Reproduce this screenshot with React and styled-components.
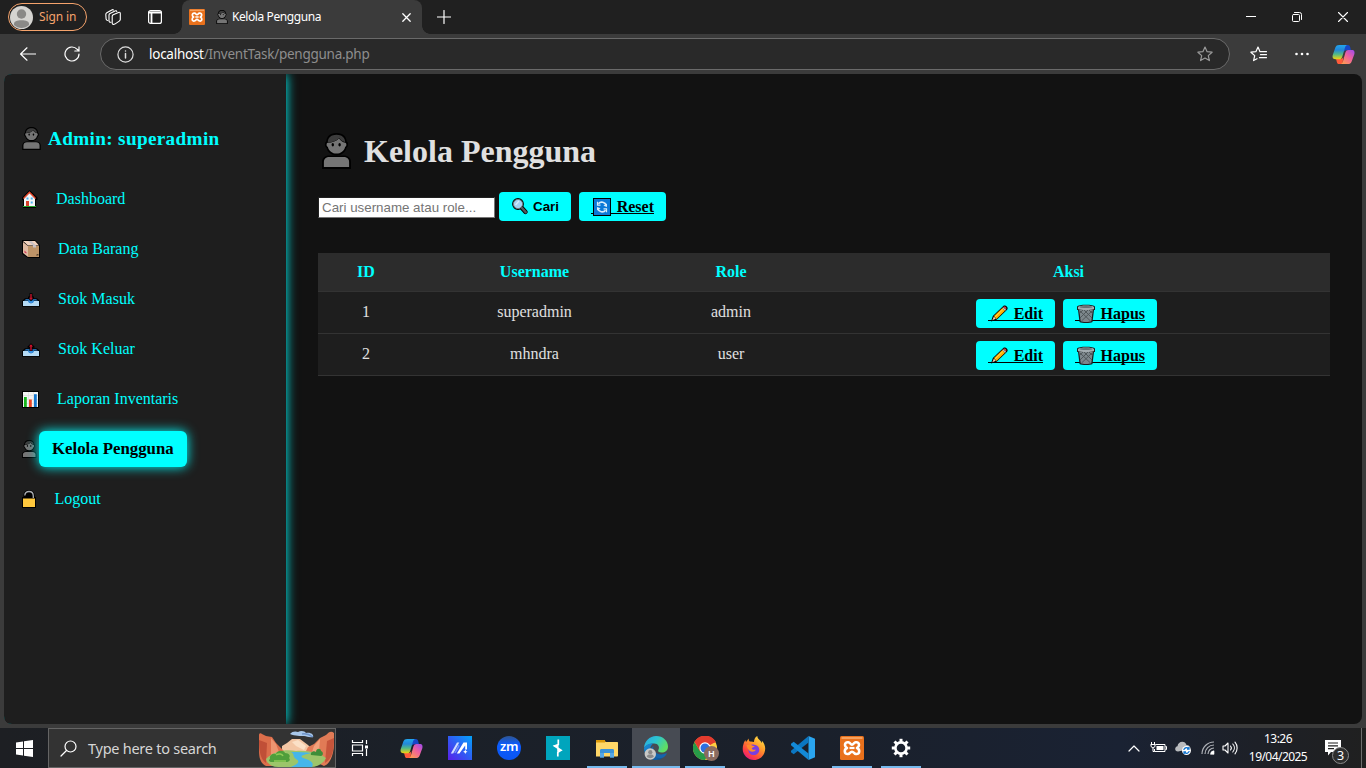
import React from "react";
import styled, { createGlobalStyle, css } from "styled-components";

const ui = `"Noto Sans", "Open Sans", sans-serif`;
const serif = `"Liberation Serif", "Times New Roman", serif`;

const GlobalStyle = createGlobalStyle`
  *, *::before, *::after { box-sizing: border-box; }
  html, body { margin: 0; padding: 0; overflow: hidden; background: #3b3b3b; }
  svg { display: block; flex: none; }
`;

/* ---------- emoji style drawings ---------- */

const PersonIcon = ({ w = 29, h = 36 }) => (
  <svg width={w} height={h} viewBox="0 0 29 36">
    <path d="M0 36V29c0-4 3-6.500 7.500-6.500h14c4.500 0 7.500 2.500 7.500 6.500v7z" fill="#000" />
    <path d="M1.900 34v-5c0-3.200 2.300-5 5.600-5h14c3.300 0 5.600 1.800 5.600 5v5z" fill="#757575" />
    <path d="M14.500 0C7.500 0 4.600 4 4.300 8.500 2.300 9.500 2.500 14 4.500 14.800c1.200 4.700 5.200 7.700 10 7.700s8.800-3 10-7.700c2-.8 2.200-5.300.2-6.300C24.400 4 21.500 0 14.500 0z" fill="#000" />
    <path d="M5.800 9.800c4.500-.2 9-1.900 11.200-4.300 1.600 2.300 3.600 3.700 6.200 4.300 1.600.2 1.600 3.700-.1 4.100-.9 4-4.500 6.600-8.600 6.600s-7.700-2.600-8.600-6.600c-1.700-.4-1.700-4.100-.1-4.100z" fill="#757575" />
    <path d="M5.800 9.400C5.800 4.500 9.500 1.800 14.500 1.800s8.700 2.700 8.700 7.400c-2.400-.6-4.600-2-6-4.200C15 7.800 10.500 9.400 5.800 9.400z" fill="#3c3c3c" />
    <ellipse cx="10.800" cy="11.800" rx="1.200" ry="1.800" fill="#000" />
    <ellipse cx="17.600" cy="11.800" rx="1.200" ry="1.800" fill="#000" />
  </svg>
);

const HouseIcon = () => (
  <svg width="16" height="18" viewBox="0 0 16 18">
    <path d="M7.500 0 0 7.500v2.500h1v8h13v-8h1.500V7.500z" fill="#000" />
    <path d="M2 8.500 7.500 3 13 8.500V16H2z" fill="#f3f5f7" />
    <path d="M1.500 8.500 7.500 2.300l6 6.200" fill="none" stroke="#e8472b" strokeWidth="1.300" />
    <path d="M4.500 7.500h2v2h-2zM8.700 7.500h2v2h-2zM8.700 11.500h2v2h-2z" fill="#48b5ef" />
    <path d="M4 11h3v5H4z" fill="#d8402a" />
    <path d="M1 16h13v1H1z" fill="#23a52c" />
  </svg>
);

const BoxIcon = () => (
  <svg width="18" height="18" viewBox="0 0 18 18">
    <path d="M0 0h13l5 5v13H6l-6-4z" fill="#000" />
    <path d="M1 2l5 4v11l-5-4z" fill="#dfb9a0" />
    <path d="M6 6h11v11H6z" fill="#bd9367" />
    <path d="M1 1h12l4 4.500H6z" fill="#f2d2bd" />
    <path d="M6 1h3.500l4.500 4.500v2h-3v-2z" fill="#c9c1c4" />
    <path d="M2.500 10.500l2 2v1l-2-1z" fill="#d23258" />
    <path d="M14 15.500l1-1.500h1.500v1.500z" fill="#554431" />
  </svg>
);

const TrayIcon = ({ out }) => (
  <svg width="18" height="16" viewBox="0 0 18 16">
    <g transform="translate(0 2.300) scale(1 .9)">
      <path d="M0 8.500L3 5.500h12l3 3V15H0z" fill="#000" />
      <path d="M2 8L4 6.500h10L16 8z" fill="#2f8be0" />
      <path d="M1 8.500h5.500a2.500 2.500 0 005 0H17V14H1z" fill="#b5dbf5" />
      <path d="M6 8h6a3 3 0 01-6 0z" fill="#3592e6" />
      {out ? (
        <g>
          <path d="M9 0l3.500 3.600V5h-2v3.500h-3V5h-2V3.600z" fill="#000" />
          <path d="M9 1l2 2.500H9.700V8H8.300V3.500H7z" fill="#d3122e" />
        </g>
      ) : (
        <g>
          <path d="M7.500 0h3v3.500H12V5.500L9 8.800 6 5.500v-2h1.500z" fill="#000" />
          <path d="M8.300.8h1.400V5H11L9 7.600 7 5h1.300z" fill="#c5132c" />
        </g>
      )}
    </g>
  </svg>
);

const ChartIcon = () => (
  <svg width="17" height="17" viewBox="0 0 17 17">
    <path d="M0 0h17v17H0z" fill="#000" />
    <path d="M1 1h15v15H1z" fill="#f4f4f4" />
    <path d="M1 4.500h15M1 8.500h15M1 12.500h15M6.500 1v15M11.500 1v15" stroke="#d9d9d9" strokeWidth=".6" />
    <path d="M2 6h2.800v10H2z" fill="#16b51b" />
    <path d="M7 8.500h2.800V16H7z" fill="#ed4424" />
    <path d="M12 3.200h2.800V16H12z" fill="#1677cf" />
  </svg>
);

const LockIcon = () => (
  <svg width="14" height="18" viewBox="0 0 14 18">
    <path d="M0 7h1.500C1 2.500 3.500 0 7 0s6 2.500 5.800 7H14v11H0z" fill="#000" />
    <path d="M2.800 5.500C3 3 4.800 1.500 7 1.500s4.300 1.500 4.300 4.500v2" fill="none" stroke="#a9adb2" strokeWidth="1.300" />
    <path d="M1 8.500h12V17H1z" fill="#ffc83d" />
  </svg>
);

const LensIcon = () => (
  <svg width="16" height="17" viewBox="0 0 16 17">
    <path d="M9.500 9.500l4 4.500" stroke="#000" strokeWidth="4.200" strokeLinecap="round" />
    <circle cx="6" cy="6" r="5" fill="#a3d2f3" stroke="#000" strokeWidth="1.800" />
    <circle cx="6" cy="6" r="4.600" fill="#a3d2f3" stroke="#737a80" strokeWidth="1" />
    <path d="M10 10l3.700 4.200" stroke="#53595f" strokeWidth="2.500" strokeLinecap="round" />
    <path d="M3.500 7l3.500-4" stroke="#d6eefd" strokeWidth="1.200" />
  </svg>
);

const RefreshIcon = () => (
  <svg width="18" height="18" viewBox="0 0 18 18">
    <path d="M0 0h18v18H0z" fill="#000" />
    <path d="M1 1h16v16H1z" fill="#0b79d8" />
    <path d="M4.800 10.500a4.500 4.500 0 007.800 1.700M13.200 7.500a4.500 4.500 0 00-7.800-1.700" fill="none" stroke="#d8edfc" strokeWidth="1.700" />
    <path d="M4 12.500V9l3.600 1.300zM14 5.500V9l-3.600-1.300z" fill="#d8edfc" />
    <path d="M4.500 3.800v3.400h3M13.500 14.200v-3.400h-3" fill="none" stroke="#d8edfc" strokeWidth="1.200" />
  </svg>
);

const PencilIcon = () => (
  <svg width="19" height="19" viewBox="0 0 20 19">
    <path d="M1 18l2-6L14 1.500c2-1.800 6 1.500 4 4L7 16z" fill="#000" />
    <path d="M2.500 16.500l1.600-3.800 2 2.200z" fill="#f5d5b8" />
    <path d="M4.200 12.200L13 3.800l2.800 2.700-9 8.700z" fill="#ffb300" />
    <path d="M5.200 13.200l8.800-8.400" stroke="#ffd34f" strokeWidth="1" />
    <path d="M13 3.800l1-1 2.900 2.800-1 1z" fill="#c4cbd0" />
    <path d="M14.200 2.600c1.500-1.300 4 .8 2.700 2.800z" fill="#e9414d" />
  </svg>
);

const BinIcon = () => (
  <svg width="18" height="19" viewBox="0 0 18 19">
    <path d="M0 2.500C1 0 17 0 18 2.500V6h-1l-1.500 12c-2 1.300-11 1.300-13 0L1 6H0z" fill="#1b1e20" />
    <path d="M2.200 6h13.600l-1.500 11.300c-2 .9-8.600.9-10.600 0z" fill="#7d878c" />
    <path d="M3 7l10.500 10M7 6l8 8M12 6l3.500 3.500M15 7L4.500 17M11 6l-8 8M6 6L2.800 9" stroke="#4b5256" strokeWidth=".9" />
    <path d="M1 3c1.500-2 14.500-2 16 0v2c-2 1.300-14 1.300-16 0z" fill="#a4adb1" />
    <ellipse cx="9" cy="3" rx="6.500" ry="1" fill="#687277" />
  </svg>
);

/* ---------- application logos ---------- */

const CopilotIcon = ({ size }) => (
  <svg width={size} height={size} viewBox="0 0 24 24">
    <defs>
      <linearGradient id="cpBlue" x1="0" y1="0" x2="0" y2="1">
        <stop offset="0" stopColor="#21a6ee" />
        <stop offset=".35" stopColor="#2387d8" />
        <stop offset=".65" stopColor="#52b985" />
        <stop offset="1" stopColor="#f4d50c" />
      </linearGradient>
      <linearGradient id="cpPink" x1="1" y1="0" x2=".2" y2="1">
        <stop offset="0" stopColor="#9b4af0" />
        <stop offset=".5" stopColor="#f0609d" />
        <stop offset="1" stopColor="#ff9b51" />
      </linearGradient>
    </defs>
    <path d="M13 2h3.500c1.400 0 2 .8 2.400 2l.9 3.500H15c-1.500 0-2.400 1-2.800 2.200z" fill="#1746c8" />
    <path d="M11 22H7.500c-1.400 0-2-.8-2.400-2l-.9-3.500H9c1.500 0 2.400-1 2.800-2.200z" fill="#ff5b3a" />
    <path d="M7.500 2H16c-1.300.3-2 1.300-2.400 2.600L10.800 14c-.6 2-1.600 3-3.600 3H3.500C.8 17 .2 14.800.8 12.600L3.500 4.800C4.200 2.800 5.500 2 7.500 2z" fill="url(#cpBlue)" />
    <path d="M16.500 22H9c1.200-.3 1.900-1.200 2.300-2.500L14 10c.6-2 1.600-2.700 3.300-2.700h3.400c2.700 0 3.200 2.200 2.600 4.400l-2.800 7.500c-.7 2-2 2.800-4 2.800z" fill="url(#cpPink)" />
  </svg>
);

const XamppIcon = ({ size }) => (
  <svg width={size} height={size} viewBox="0 0 24 24">
    <rect width="24" height="24" rx="1.500" fill="#e9711c" />
    <path d="M1.500 1h21v2h-21z" fill="#f6a15e" />
    <path
      d="M8.300 6.200c-2.300-.2-3.300 1-3.300 2.900 0 1.500.6 2.300 2 2.900-1.400.6-2.200 1.500-2.200 3.200 0 2.200 1.400 3 3.200 2.800 2-.2 2-2.300 4-2.300s2 2.100 4 2.300c1.800.2 3.200-.6 3.200-2.800 0-1.700-.8-2.600-2.200-3.200 1.400-.6 2-1.400 2-2.900 0-1.900-1-3.100-3.300-2.900-2 .2-2 2.400-3.700 2.400s-1.700-2.200-3.700-2.400z"
      fill="none" stroke="#fff" strokeWidth="2.600" strokeLinejoin="round" />
    <path d="M9.500 12h5" stroke="#fff" strokeWidth="2.200" />
  </svg>
);

const MIcon = () => (
  <svg width="24" height="24" viewBox="0 0 24 24">
    <defs>
      <linearGradient id="mBg" x1="0" y1="1" x2="1" y2="0">
        <stop offset="0" stopColor="#5a1fe8" />
        <stop offset=".5" stopColor="#2f5cf4" />
        <stop offset="1" stopColor="#03a5fb" />
      </linearGradient>
    </defs>
    <rect width="24" height="24" fill="url(#mBg)" />
    <path d="M2.800 17.500L9 6.500h2.300L5.200 17.500z" fill="#cfdcff" />
    <path d="M8.800 17.500L15.500 6.500H19v7h-1.800v-4l-5.800 8z" fill="#fff" />
    <path d="M17.300 13.500l.7 1.500 1.500.7-1.500.7-.7 1.500-.7-1.500-1.500-.7 1.500-.7z" fill="#fff" />
    <path d="M8.500 12.500l2.300-4 .8 1.500-3.800 7H6.200z" fill="#8fabff" opacity=".7" />
  </svg>
);

const ZoomCircle = styled.div`
  width: 24px;
  height: 24px;
  border-radius: 50%;
  background: linear-gradient(#2f5590, #0b5cff 35%, #0b55f0);
  color: #fff;
  font: 600 13px/21px ${ui};
  letter-spacing: -0.4px;
  text-align: center;
`;

const BoltAppIcon = () => (
  <svg width="24" height="24" viewBox="0 0 24 24">
    <rect width="24" height="24" fill="#00a5bd" />
    <path d="M12.300 3.500v5L8.500 10l6.500 4.300-3.200 2V20.500" fill="none" stroke="#fff" strokeWidth="1.700" />
    <path d="M7 9.800l5.500-1.300v3.700zM16.500 14.500l-5.300 1v-3.500z" fill="#fff" />
  </svg>
);

const FolderIcon = () => (
  <svg width="22" height="19" viewBox="0 0 22 19">
    <path d="M0 1h8l2 2H0z" fill="#e8a110" />
    <path d="M0 3h21c.6 0 1 .4 1 1v12.500c0 .6-.4 1-1 1H0z" fill="#ffd768" />
    <path d="M0 1h9v2.500H0z" fill="#dd9a09" />
    <path d="M4 18.500v-7c0-1 .6-1.500 1.500-1.500h11c1 0 1.500.5 1.500 1.500v7h-4V14H8v4.500z" fill="#3a92d8" />
    <path d="M4 14h4v4.500H4zM14 14h4v4.500h-4z" fill="#57a7e5" />
  </svg>
);

const EdgeIcon = () => (
  <svg width="24" height="24" viewBox="0 0 24 24">
    <defs>
      <linearGradient id="edTop" x1="0" y1="0" x2="1" y2=".5">
        <stop offset="0" stopColor="#2ba5e0" />
        <stop offset=".5" stopColor="#2cc5d2" />
        <stop offset="1" stopColor="#60dd62" />
      </linearGradient>
      <linearGradient id="edLow" x1="0" y1="0" x2="1" y2="1">
        <stop offset="0" stopColor="#1a90dc" />
        <stop offset="1" stopColor="#0b4f91" />
      </linearGradient>
    </defs>
    <path d="M0 12C.5 5 5.500 0 12.200 0 19 0 24 5 24 10.500c0 4-3 6-6.300 6-3 0-4.200-1.300-3.400-2.500 2-3-.3-6.500-4-6.500C5.500 7.500 1.500 9.500 0 12z" fill="url(#edTop)" />
    <path d="M0 12c1.500-3 5-5 9.500-4.500-2 1-3.500 3.500-3.300 6.500.4 6 6.500 9.500 13 7.500-2 1.700-4.500 2.500-7.200 2.500C5 24 0 19 0 12z" fill="url(#edLow)" />
    <path d="M9.500 10c-1.500 6.500 5.500 10.500 12.800 7.300.4 0 .6.200.3.700-1 1.700-2.300 3-3.700 3.700-7 2-12-2.500-12-7 0-2 1-3.700 2.600-4.700z" fill="#1565ad" />
    <circle cx="6.300" cy="18" r="5.700" fill="#c9c9c7" />
    <circle cx="6.300" cy="16.200" r="2.100" fill="#8b8b8b" />
    <path d="M2.700 20.600c.6-1.700 2-2 3.600-2s3 .3 3.600 2c-2 2.200-5.200 2.200-7.200 0z" fill="#8b8b8b" />
  </svg>
);

const ChromeWrap = styled.div`
  position: relative;
  width: 24px;
  height: 24px;
`;
const ChromeBadge = styled.span`
  position: absolute;
  left: 11px;
  top: 10px;
  width: 15px;
  height: 15px;
  border-radius: 50%;
  background: #8b6b60;
  color: #fff;
  font: 600 9px/15px ${ui};
  text-align: center;
`;
const ChromeIcon = () => (
  <ChromeWrap>
    <svg width="24" height="24" viewBox="0 0 24 24">
      <circle cx="12" cy="12" r="12" fill="#ffcd40" />
      <path d="M12 12L1.600 6A12 12 0 0122.400 6z" fill="#e33b2e" />
      <path d="M1.600 6A12 12 0 0012 24l5-9-10 0z" fill="#279b48" />
      <path d="M12 6.500h11A12 12 0 001.600 6l5.200 9z" fill="#e33b2e" />
      <circle cx="12" cy="12" r="5.700" fill="#fff" />
      <circle cx="12" cy="12" r="4.500" fill="#2d6fe0" />
    </svg>
    <ChromeBadge>H</ChromeBadge>
  </ChromeWrap>
);

const FirefoxIcon = () => (
  <svg width="24" height="24" viewBox="0 0 24 24">
    <defs>
      <linearGradient id="ffBody" x1=".9" y1="0" x2=".2" y2="1">
        <stop offset="0" stopColor="#fff04a" />
        <stop offset=".4" stopColor="#ff9a2a" />
        <stop offset=".75" stopColor="#ff433f" />
        <stop offset="1" stopColor="#e21585" />
      </linearGradient>
    </defs>
    <path d="M1.500 8C2 6 3 4.500 3.500 4c0 1 .3 1.500.6 2C5 4.800 6 3.500 6.500 2.500c.2 1.500.5 2.300 1.300 3 1.500-.2 3 0 4.200.5 0-2.500 1-4.800 3.300-6 0 2.500 1.700 3.300 3.200 5 .5.600 1 1.300 1.300 2 .3-.700.2-1.500 0-2.300 2.200 2 3.400 4.800 3.400 7.800C23.200 19 18.200 24 12 24S.7 19 .7 13c0-1.800.2-3.500.8-5z" fill="url(#ffBody)" />
    <path d="M7 11c1-2.300 3-2.800 5-2.200 3 .2 5.300 2 5.300 5 0 3.200-2.500 5.300-5.300 5.300-3.500 0-5.800-2.500-5.500-5.600z" fill="#7a3fe0" />
    <path d="M4.500 9c2 0 3-.6 4.500 0 1 .5 2 1 3.700 1-.3 1.200-2.500 1.300-2.900 2.200.2 1.600 2.500 2 4.200 1.300-1 2.400-4.500 3-6.500 1.200C5.500 13 5 11 4.500 9z" fill="#ff8a2b" />
  </svg>
);

const VsCodeIcon = () => (
  <svg width="24" height="24" viewBox="0 0 24 24">
    <path d="M17.500 0L24 2.800v18.400L17.500 24z" fill="#2aa5ef" />
    <path d="M17.500 0v6.500L2.700 18.300 0 16.300v-1.500z" fill="#0b77c2" />
    <path d="M17.500 24v-6.500L2.700 5.700 0 7.700v1.500z" fill="#1389d6" />
  </svg>
);

const GearIcon = () => {
  const teeth = [0, 45, 90, 135, 180, 225, 270, 315];
  return (
    <svg width="20" height="20" viewBox="0 0 20 20">
      <circle cx="10" cy="10" r="5.600" fill="none" stroke="#fff" strokeWidth="2.600" />
      {teeth.map((a) => (
        <rect key={a} x="8.500" y=".8" width="3" height="3.600" fill="#fff" transform={`rotate(${a} 10 10)`} />
      ))}
    </svg>
  );
};

const LandscapeIcon = () => (
  <svg width="76" height="37" viewBox="0 0 76 37">
    <path d="M32 4c2-3 6-3 8-2 3-2 7-1 8 1 5-1 8 2 7 4 -4 1-6-1-9-1s-9 0-14-2z" fill="#a9c8ea" />
    <path d="M44 4c4-1 8 1 11 3" stroke="#6f94c9" strokeWidth="1.500" fill="none" />
    <path d="M24 16l5-3 5-4h8l8 6 4 4v5H24z" fill="#f3c6a4" />
    <path d="M34 12l6-2 8 6-2 4-8-4z" fill="#fbe0c6" />
    <path d="M1 5c0-2 2-2 3-1l4 2 6 1 4 6 5 5 5 5 1 6-12 7H8c-6-3-7-9-7-16z" fill="#dc6e4b" />
    <path d="M1 10l8 3-1 20c-6-4-7-13-7-23z" fill="#c04f37" />
    <path d="M13 8l5 6 3 8-8 8z" fill="#ee9570" />
    <path d="M76 3c-3-3-6 0-8 2l-6 3-6 6-6 3-4 8 14 8 6 3c8-3 11-15 10-33z" fill="#e17b56" />
    <path d="M76 8l-7 3-2 22c7-4 9-12 9-25z" fill="#c6553b" />
    <path d="M62 9l-6 7-3 9 8-3z" fill="#f3a27c" />
    <path d="M8 29c8-8 20-10 30-8 12-1 24 2 30 7-3 6-9 9-15 9H20c-6 0-11-3-12-8z" fill="#9cc56a" />
    <path d="M33 22c8 0 15 0 20 1-8 2-14 3-5 6 6 2 8 5 6 8H33c6-3 10-5 5-8-4-3-1-5-5-7z" fill="#45b6ea" />
    <path d="M12 29c-1-4 3-6 6-5 1-4 8-4 9-1 4 0 6 3 4 5 2 2 0 4-3 4H14c-3 0-4-2-2-3z" fill="#4f9e3b" />
    <path d="M18 25c3-2 6-1 7 1M16 31h12" stroke="#8fcb56" strokeWidth="1.500" fill="none" />
    <path d="M53 25c-1-3 3-5 5-3 0-4 5-4 5-1 3 1 2 5 0 5z" fill="#3f8d38" />
  </svg>
);

/* ---------- line icons ---------- */

const Line = styled.svg.attrs((p) => ({
  fill: "none",
  stroke: p.stroke || "#fff",
  strokeWidth: p.sw || 1.2,
  strokeLinecap: "round",
  strokeLinejoin: "round",
}))``;

/* ---------- browser frame ---------- */

const Screen = styled.div`
  width: 1366px;
  height: 768px;
  display: flex;
  flex-direction: column;
  background: #3b3b3b;
  overflow: hidden;
`;

const TabStrip = styled.header`
  height: 34px;
  flex: none;
  display: flex;
  align-items: center;
  background: #202020;
`;

const SignIn = styled.div`
  width: 79px;
  height: 28px;
  margin-left: 8px;
  border: 1px solid #f5a36c;
  border-radius: 14px;
  display: flex;
  align-items: center;
  gap: 6px;
  padding-left: 1px;
  color: #f5a36c;
  font: 12px/16px ${ui};
  letter-spacing: -0.1px;
  white-space: nowrap;
`;

const StripIcon = styled.div`
  margin-left: ${(p) => p.$gap}px;
`;

const Tab = styled.div`
  position: relative;
  width: 240px;
  height: 34px;
  margin-left: 20px;
  padding: 0 9px 0 7px;
  display: flex;
  align-items: center;
  background: #3b3b3b;
  border-radius: 8px 8px 0 0;
  color: #fff;
  font: 12px/16px ${ui};
  &::before, &::after {
    content: "";
    position: absolute;
    bottom: 0;
    width: 8px;
    height: 8px;
  }
  &::before {
    left: -8px;
    background: radial-gradient(circle at 0 0, #202020 7.500px, #3b3b3b 8px);
  }
  &::after {
    right: -8px;
    background: radial-gradient(circle at 100% 0, #202020 7.500px, #3b3b3b 8px);
  }
`;
const TabTitle = styled.span`
  flex: 1;
  padding-left: 4px;
  letter-spacing: -0.42px;
`;
const TabEmoji = styled.span`
  margin-left: 11px;
`;

const WindowButtons = styled.div`
  margin-left: auto;
  display: flex;
  & > * {
    width: 46px;
    display: flex;
    justify-content: center;
  }
`;

const Toolbar = styled.div`
  height: 40px;
  flex: none;
  display: flex;
  align-items: center;
  padding: 0 10px 0 20px;
`;
const AddressBar = styled.div`
  width: 1130px;
  height: 32px;
  margin-left: 20px;
  padding: 0 16px;
  display: flex;
  align-items: center;
  border: 1px solid #6a6a6a;
  border-radius: 16px;
  background: #292929;
`;
const Url = styled.div`
  flex: 1;
  margin-left: 15px;
  color: #8e8e8e;
  font: 13.500px/20px ${ui};
  letter-spacing: -0.26px;
  b { color: #fff; font-weight: 400; }
`;

/* ---------- page ---------- */

const Page = styled.div`
  height: 650px;
  margin: 0 4px 4px;
  flex: none;
  display: flex;
  border-radius: 8px;
  overflow: hidden;
  background: #121212;
  font-family: ${serif};
  color: #e0e0e0;
`;

const Sidebar = styled.nav`
  width: 282px;
  padding: 45px 18px 0;
  background: #1e1e1e;
  box-shadow: 0 0 11px #00ffff;
  color: #00ffff;
`;
const AdminTitle = styled.h3`
  height: 40px;
  margin: 0 0 15px;
  display: flex;
  align-items: center;
  gap: 7px;
  font-size: 19.200px;
  letter-spacing: 0.34px;
  white-space: nowrap;
  svg { margin-top: -2px; }
`;
const NavRow = styled.div`
  height: 50px;
  display: flex;
  align-items: center;
`;
const NavIcon = styled.span`
  width: ${(p) => p.$w}px;
`;
const NavLink = styled.a`
  height: 36px;
  padding: 0 13px;
  border-radius: 6px;
  font-size: 16px;
  line-height: 36px;
  white-space: nowrap;
  ${(p) =>
    p.$active &&
    css`
      z-index: 1;
      background: #00ffff;
      color: #000;
      font-size: 16.800px;
      font-weight: 700;
      box-shadow: 0 0 12px #00ffff;
    `}
`;

const Main = styled.main`
  flex: 1;
  padding: 55px 32px 0;
`;
const Heading = styled.h1`
  height: 44px;
  margin: 0 0 19px;
  padding-left: 4px;
  display: flex;
  align-items: center;
  gap: 13px;
  font-size: 32px;
  line-height: 44px;
`;
const SearchForm = styled.div`
  display: flex;
  align-items: center;
`;
const SearchInput = styled.input`
  width: 177px;
  height: 21px;
  margin: 2px 4px 0 0;
  padding: 1px 3px;
  border: 1px inset #767676;
  background: #fff;
  font: 13.333px "Liberation Sans", Arial, sans-serif;
  &::placeholder { color: #757575; }
`;
const Button = styled.a`
  width: ${(p) => p.$w}px;
  height: 29px;
  padding: 0 12px;
  display: inline-flex;
  align-items: center;
  justify-content: space-between;
  border-radius: 4px;
  background: #00ffff;
  color: #000;
  font: 700 ${(p) => (p.$plain ? `13.333px "Liberation Sans", Arial, sans-serif` : `16px ${serif}`)};
  position: relative;
  & + & { margin-left: 8px; }
  ${(p) =>
    !p.$plain &&
    css`
      &::before {
        content: "";
        position: absolute;
        left: 12px;
        right: 12px;
        bottom: 7px;
        height: 1px;
        background: #000;
      }
    `}
  svg, span { position: relative; }
  svg { margin-left: ${(p) => (p.$plain ? 1 : 2)}px; }
`;

const Table = styled.table`
  width: 1012px;
  margin-top: 32px;
  border-collapse: separate;
  border-spacing: 0;
  table-layout: fixed;
  background: #1e1e1e;
  text-align: center;
  font-size: 16px;
  th, td { border-bottom: 1px solid #333; }
`;
const Th = styled.th`
  width: ${(p) => p.$w}px;
  height: 39px;
  padding: 0;
  background: #2c2c2c;
  color: #00ffff;
`;
const Td = styled.td`
  height: 42px;
  padding: ${(p) => (p.$actions ? "2px 4px 0 0" : "0 0 2px")};
`;
const Actions = styled.div`
  display: flex;
  justify-content: center;
`;

/* ---------- taskbar ---------- */

const Taskbar = styled.footer`
  height: 40px;
  flex: none;
  display: flex;
  background: linear-gradient(90deg, #1d1f23 0, #1b2028 30%, #1a202b 60%, #1a2233 82%, #1d2027 92%, #202020 100%);
  color: #fff;
  font-family: ${ui};
`;
const StartButton = styled.div`
  width: 48px;
  display: grid;
  place-items: center;
`;
const SearchBox = styled.div`
  width: 288px;
  height: 40px;
  display: flex;
  align-items: center;
  padding-left: 11px;
  border: 1px solid #646464;
  background: #333;
  color: #d6d6d6;
  font-size: 14.500px;
  white-space: nowrap;
`;
const SearchLabel = styled.span`
  width: 170px;
  margin-left: 11px;
  letter-spacing: -0.26px;
`;
const Apps = styled.div`
  display: flex;
  gap: 1px;
`;
const AppSlot = styled.div`
  width: 48px;
  display: grid;
  place-items: center;
  margin-right: ${(p) => p.$after || 0}px;
  background: ${(p) =>
    p.$running
      ? `linear-gradient(#76b9ed, #76b9ed) center bottom / ${p.$active ? 48 : 40}px 2px no-repeat`
      : "none"};
  ${(p) => p.$active && "background-color: #474b53;"}
`;
const Tray = styled.div`
  margin-left: auto;
  display: flex;
  align-items: center;
`;
const Clock = styled.div`
  width: 60px;
  margin-left: 9px;
  text-align: center;
  font-size: 12px;
  line-height: 18px;
  letter-spacing: -0.55px;
`;
const Notices = styled.div`
  position: relative;
  width: 37px;
  margin-left: 17px;
  height: 40px;
  padding-top: 12px;
  border-right: 1px solid #6d6d6d;
  margin-right: 4px;
`;
const NoticeCount = styled.span`
  position: absolute;
  left: 7px;
  top: 19px;
  width: 17px;
  height: 17px;
  border: 1px solid #8a8a8a;
  border-radius: 50%;
  background: #2e2e2e;
  font-size: 12.500px;
  line-height: 15px;
  text-align: center;
`;

const navItems = [
  { label: "Dashboard", w: 21, icon: <HouseIcon /> },
  { label: "Data Barang", w: 23, icon: <BoxIcon /> },
  { label: "Stok Masuk", w: 23, icon: <TrayIcon /> },
  { label: "Stok Keluar", w: 23, icon: <TrayIcon out /> },
  { label: "Laporan Inventaris", w: 22, icon: <ChartIcon /> },
  { label: "Kelola Pengguna", w: 17, icon: <PersonIcon w={14.5} h={18} />, active: true },
  { label: "Logout", w: 19.5, icon: <LockIcon /> },
];

const users = [
  { id: 1, name: "superadmin", role: "admin" },
  { id: 2, name: "mhndra", role: "user" },
];

const TaskViewIcon = () => (
  <svg width="18" height="16" viewBox="0 0 18 16" fill="none" stroke="#fff" strokeWidth="1.200">
    <path d="M1.500 0v2.500h10V0M1.500 16v-2.500h10V16M1.500 5h10v6h-10zM15.500 0v4M15.500 9v7" />
    <path d="M14 5.500h3v3h-3z" fill="#fff" stroke="none" />
  </svg>
);

const apps = [
  { key: "taskview", icon: <TaskViewIcon />, after: 2 },
  { key: "copilot", icon: <CopilotIcon size={23} /> },
  { key: "m", icon: <MIcon /> },
  { key: "zm", icon: <ZoomCircle>zm</ZoomCircle> },
  { key: "bolt", icon: <BoltAppIcon /> },
  { key: "files", icon: <FolderIcon />, running: true },
  { key: "edge", icon: <EdgeIcon />, running: true, active: true },
  { key: "chrome", icon: <ChromeIcon />, running: true },
  { key: "firefox", icon: <FirefoxIcon /> },
  { key: "code", icon: <VsCodeIcon /> },
  { key: "xampp", icon: <XamppIcon size={24} />, running: true },
  { key: "settings", icon: <GearIcon />, running: true },
];

function BrowserTabs() {
  return (
    <TabStrip>
      <SignIn>
        <svg width="23" height="23" viewBox="0 0 23 23">
          <circle cx="11.500" cy="11.500" r="11.500" fill="#d5d4d1" />
          <circle cx="11.500" cy="8" r="4.700" fill="#8a8987" />
          <path d="M4 19c-.5-4 3-4.800 7.500-4.800S19.500 15 19 19c-4 4-11 4-15 0z" fill="#8a8987" />
        </svg>
        Sign in
      </SignIn>
      <StripIcon $gap={18}>
        <Line width="16" height="16" viewBox="0 0 16 16" sw={1.1}>
          <path d="M7.200 7.200c0-.7.400-1.200 1-1.500l5.300-2.300c1-.4 1.800 0 1.800 1v6.200c0 .7-.3 1.100-1 1.500l-4.500 3c-1.300.7-2.400.3-2.600-.9z" />
          <path d="M6 13.200c-1.300.2-1.900-.4-2-1.300V6c0-.7.400-1.300 1-1.600l5-2.400c.8-.4 1.500-.2 1.800.5" />
          <path d="M2.800 11.500c-.9 0-1.500-.5-1.700-1.300L.8 5.500c0-.8.300-1.300 1-1.700l5-2.900c.6-.3 1.200-.3 1.600.1" />
        </Line>
      </StripIcon>
      <StripIcon $gap={27}>
        <Line width="14" height="14" viewBox="0 0 14 14">
          <rect x=".6" y=".6" width="12.800" height="12.800" rx="2" />
          <path d="M1 2.500h12M3.500 3v10" strokeWidth="1.800" />
        </Line>
      </StripIcon>
      <Tab>
        <XamppIcon size={16} />
        <TabEmoji><PersonIcon w={12} h={14} /></TabEmoji>
        <TabTitle>Kelola Pengguna</TabTitle>
        <Line width="13" height="13" viewBox="0 0 13 13" sw={1.3}><path d="M2.800 2.800l7.400 7.400M10.200 2.800l-7.400 7.400" /></Line>
      </Tab>
      <StripIcon $gap={14.500}>
        <Line width="14" height="14" viewBox="0 0 14 14"><path d="M7 .5v13M.5 7h13" /></Line>
      </StripIcon>
      <WindowButtons>
        <div><Line width="10" height="10" viewBox="0 0 10 10" sw={1}><path d="M0 4.500h10" /></Line></div>
        <div>
          <Line width="10" height="10" viewBox="0 0 10 10" sw={1}>
            <rect x=".5" y="2.500" width="7" height="7" rx="1" />
            <path d="M2.500.5h5a2 2 0 012 2v5" />
          </Line>
        </div>
        <div><Line width="10" height="10" viewBox="0 0 10 10" sw={1.1}><path d="M.5.5l9 9M9.500.5l-9 9" /></Line></div>
      </WindowButtons>
    </TabStrip>
  );
}

const StarPath = "M8 1l2.100 4.700 5 .5-3.800 3.400 1.100 5L8 12.100 3.600 14.600l1.100-5L.9 6.200l5-.5z";

function BrowserToolbar() {
  return (
    <Toolbar>
      <Line width="16" height="14" viewBox="0 0 16 14"><path d="M15.500 7H.6M7 .8L.6 7 7 13.200" /></Line>
      <StripIcon $gap={28}>
        <Line width="16" height="16" viewBox="0 0 16 16"><path d="M15 8A7 7 0 1 1 13.200 3.300L15 5M15 .8V5h-4.200" /></Line>
      </StripIcon>
      <AddressBar>
        <Line width="17" height="17" viewBox="0 0 17 17" stroke="#dedede">
          <circle cx="8.500" cy="8.500" r="7.600" />
          <path d="M8.500 7.500v4.500M8.500 4.900v.2" strokeWidth="1.500" />
        </Line>
        <Url><b>localhost</b>/InventTask/pengguna.php</Url>
        <Line width="16" height="16" viewBox="0 0 16 16" stroke="#9a9a9a"><path d={StarPath} /></Line>
      </AddressBar>
      <StripIcon $gap={20}>
        <Line width="17" height="16" viewBox="0 0 17 16">
          <path d="M10 5.700L8 1 5.900 5.700l-5 .5 3.800 3.400-1.100 5L7 12.700M10.500 5.700h6M10.500 8.700h6M9.500 11.700h7" />
        </Line>
      </StripIcon>
      <StripIcon $gap={28}>
        <svg width="14" height="4" viewBox="0 0 14 4" fill="#fff">
          <circle cx="1.500" cy="2" r="1.300" /><circle cx="7" cy="2" r="1.300" /><circle cx="12.500" cy="2" r="1.300" />
        </svg>
      </StripIcon>
      <StripIcon $gap={23}><CopilotIcon size={23} /></StripIcon>
    </Toolbar>
  );
}

function UserTable() {
  return (
    <Table>
      <thead>
        <tr>
          <Th $w={96}>ID</Th>
          <Th $w={241}>Username</Th>
          <Th $w={152}>Role</Th>
          <Th $w={523}>Aksi</Th>
        </tr>
      </thead>
      <tbody>
        {users.map((u) => (
          <tr key={u.id}>
            <Td>{u.id}</Td>
            <Td>{u.name}</Td>
            <Td>{u.role}</Td>
            <Td $actions>
              <Actions>
                <Button $w={79}><PencilIcon /><span>Edit</span></Button>
                <Button $w={94}><BinIcon /><span>Hapus</span></Button>
              </Actions>
            </Td>
          </tr>
        ))}
      </tbody>
    </Table>
  );
}

function SystemTray() {
  return (
    <Tray>
      <Line width="12" height="7" viewBox="0 0 12 7"><path d="M1 6l5-5 5 5" /></Line>
      <StripIcon $gap={10}>
        <svg width="17" height="12" viewBox="0 0 17 12" fill="none" stroke="#fff">
          <path d="M5.500 2.500h9.500v7H4.500V7M15.500 4.500h1v3h-1M1.500 0v2M4.500 0v2M.5 2.500h5M1 3v1.500L3 6l2-1.500V3M3 6v3.500h1.500" />
          <path d="M6.500 4h7v4h-7z" fill="#fff" stroke="none" />
        </svg>
      </StripIcon>
      <StripIcon $gap={8}>
        <svg width="16" height="14" viewBox="0 0 16 14">
          <path d="M3 10.500C-.8 10.500-.5 5.500 2.500 5.300 3-.5 10.500-.8 11.500 4c3 0 4 2 3.500 4z" fill="#b9bbbe" />
          <circle cx="11.500" cy="9.500" r="4.500" fill="#fff" />
          <path d="M8.800 9a2.800 2.800 0 015-1.200M14.200 10a2.800 2.800 0 01-5 1.200M14 6v2h-2M9 13v-2h2" fill="none" stroke="#1376d1" strokeWidth="1.300" />
        </svg>
      </StripIcon>
      <StripIcon $gap={10}>
        <svg width="14" height="14" viewBox="0 0 14 14" fill="none" stroke="#aeb1b7" strokeWidth="1.200">
          <path d="M1 13A12 12 0 0113 1M4 13a9 9 0 019-9M7 13a6 6 0 016-6" />
          <path d="M9.500 13.300a3.600 3.600 0 013.500-3.500v3.500z" fill="#fff" stroke="#fff" strokeWidth=".6" />
        </svg>
      </StripIcon>
      <StripIcon $gap={7}>
        <Line width="17" height="14" viewBox="0 0 17 14" sw={1.1}>
          <path d="M1 5v4h2l3 3V2L3 5zM8.500 5a3 3 0 010 4M10.800 3a6 6 0 010 8M13 1.200a9 9 0 010 11.600" />
        </Line>
      </StripIcon>
      <Clock>13:26<br />19/04/2025</Clock>
      <Notices>
        <svg width="16" height="16" viewBox="0 0 16 16">
          <path d="M0 0h16v12H6l-3 3.500V12H0z" fill="#fff" />
          <path d="M3 3h10M3 5.800h10M3 8.600h6" stroke="#202020" strokeWidth="1.200" />
        </svg>
        <NoticeCount>3</NoticeCount>
      </Notices>
    </Tray>
  );
}

export default function App() {
  return (
    <Screen>
      <GlobalStyle />
      <BrowserTabs />
      <BrowserToolbar />
      <Page>
        <Sidebar>
          <AdminTitle><PersonIcon w={19} h={23} />Admin: superadmin</AdminTitle>
          {navItems.map((n) => (
            <NavRow key={n.label}>
              <NavIcon $w={n.w}>{n.icon}</NavIcon>
              <NavLink $active={n.active}>{n.label}</NavLink>
            </NavRow>
          ))}
        </Sidebar>
        <Main>
          <Heading><PersonIcon />Kelola Pengguna</Heading>
          <SearchForm>
            <SearchInput placeholder="Cari username atau role..." />
            <Button $w={72} $plain><LensIcon /><span>Cari</span></Button>
            <Button $w={87}><RefreshIcon /><span>Reset</span></Button>
          </SearchForm>
          <UserTable />
        </Main>
      </Page>
      <Taskbar>
        <StartButton>
          <svg width="17" height="17" viewBox="0 0 17 17" fill="#fff">
            <path d="M0 2.500l7-1v6.600H0zM8 1.300L17 0v8.100H8zM0 9h7v6.600l-7-1zM8 9h9v8l-9-1.300z" />
          </svg>
        </StartButton>
        <SearchBox>
          <Line width="17" height="17" viewBox="0 0 17 17"><circle cx="10.500" cy="6.500" r="5.500" /><path d="M6.500 10.500L1 16" /></Line>
          <SearchLabel>Type here to search</SearchLabel>
          <LandscapeIcon />
        </SearchBox>
        <Apps>
          {apps.map((a) => (
            <AppSlot key={a.key} $after={a.after} $running={a.running} $active={a.active}>{a.icon}</AppSlot>
          ))}
        </Apps>
        <SystemTray />
      </Taskbar>
    </Screen>
  );
}
